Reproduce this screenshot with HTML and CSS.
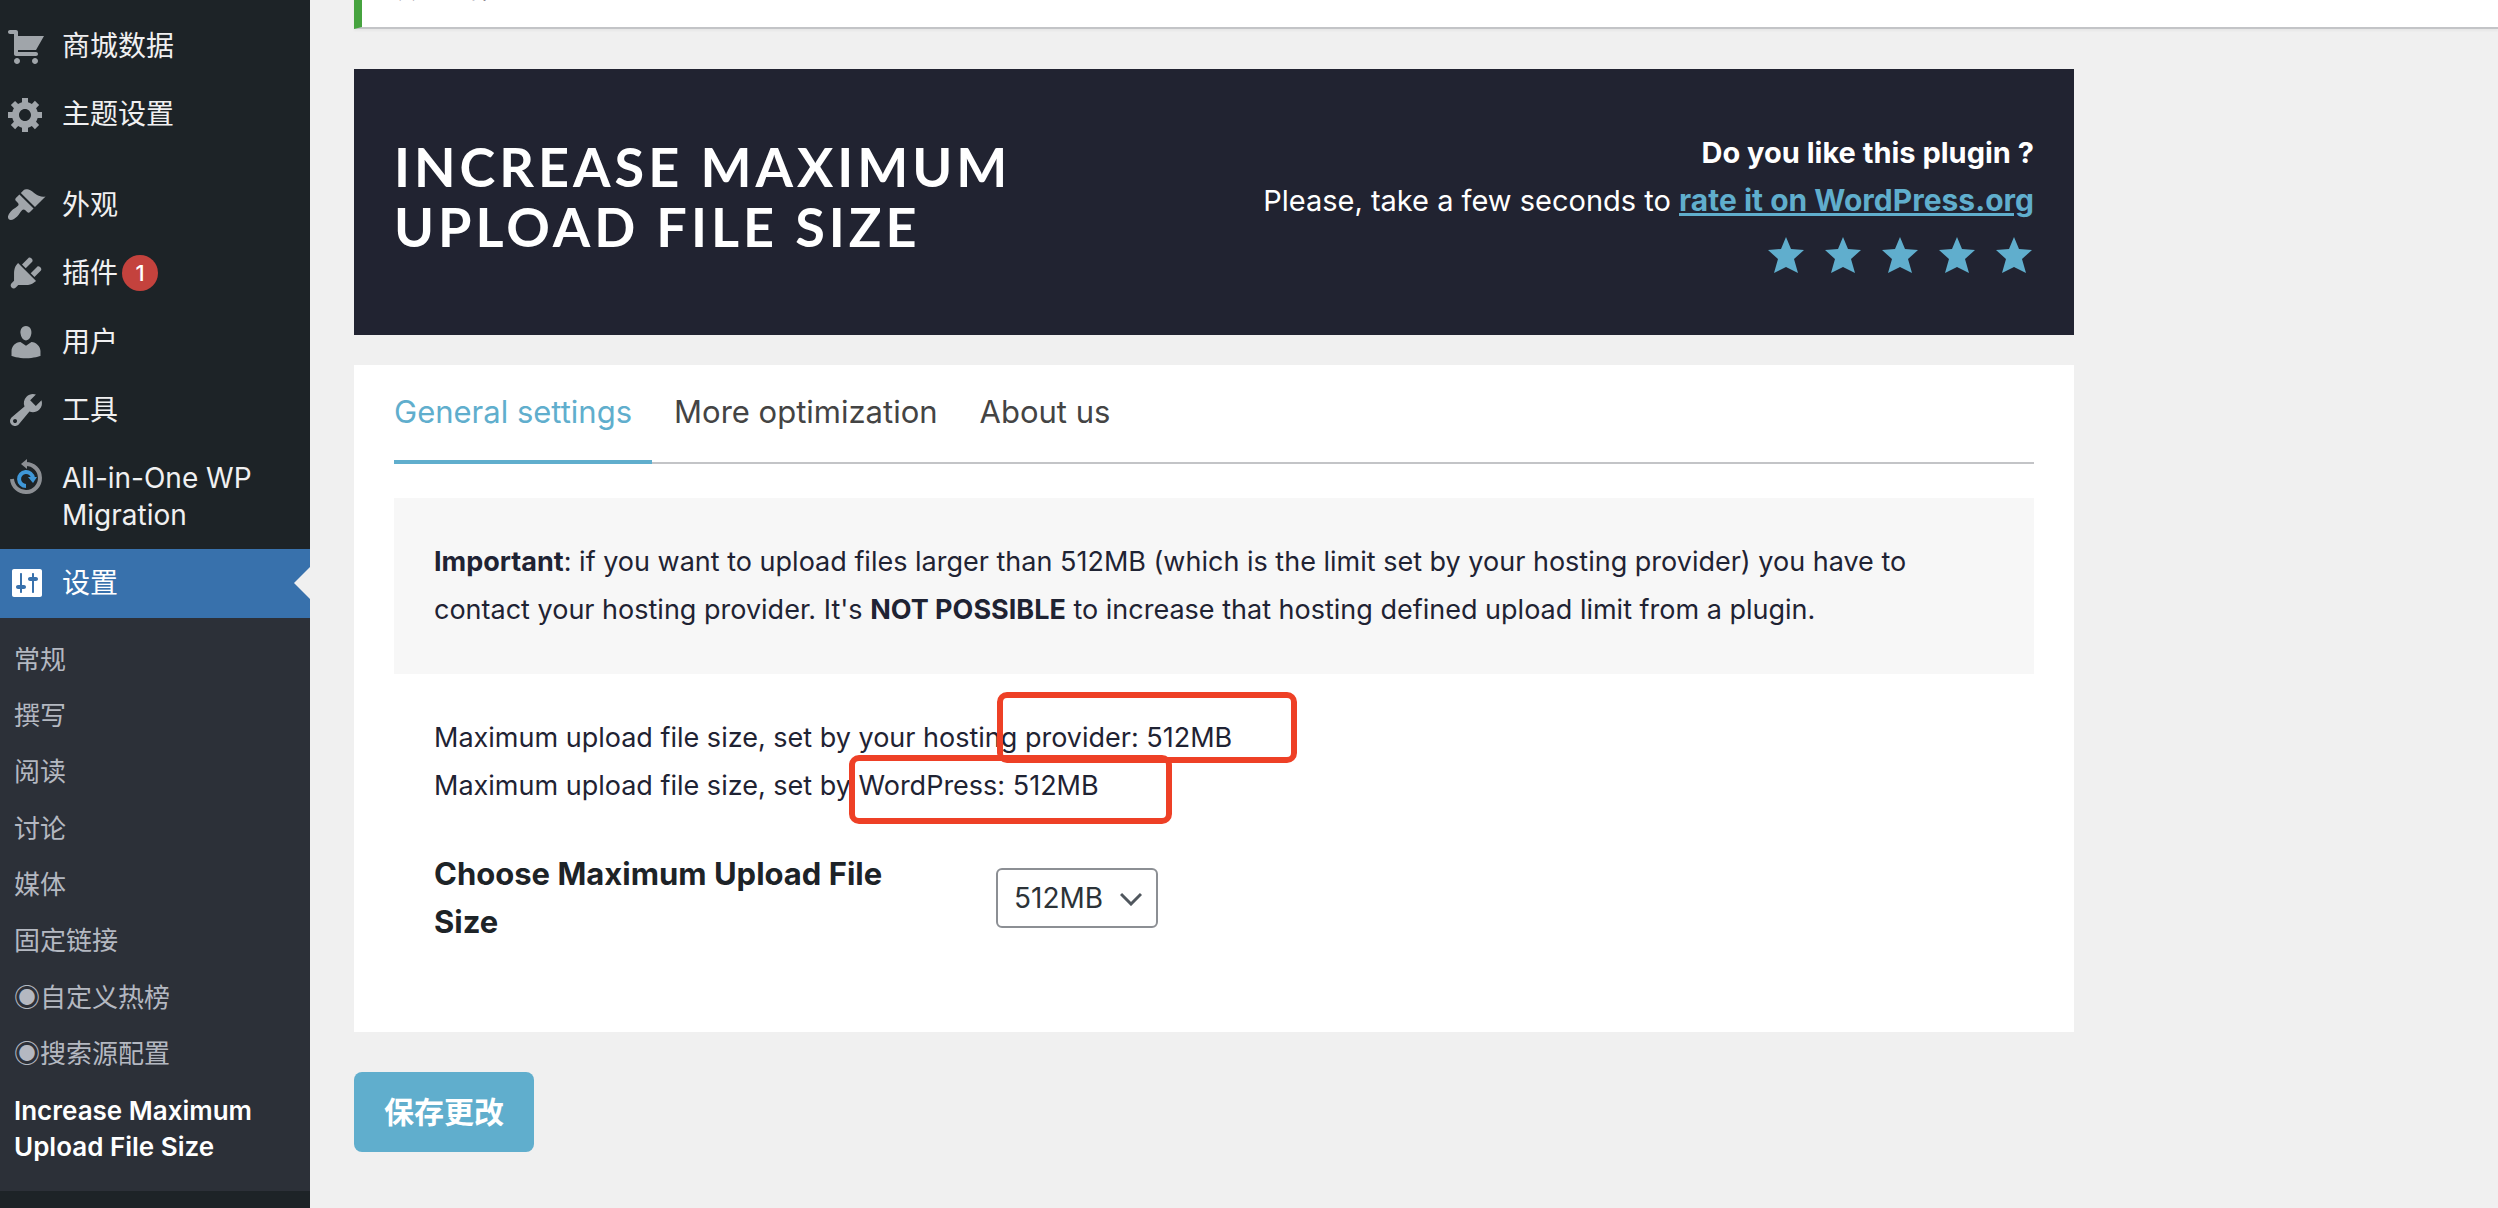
FILE: index.html
```html
<!DOCTYPE html>
<html lang="zh-CN">
<head>
<meta charset="utf-8">
<title>Increase Maximum Upload File Size</title>
<link rel="stylesheet" href="styles.css">
</head>
<body>
<div class="layout">
  <nav class="sidebar" aria-label="主菜单">
    <ul class="menu">
      <li><a class="menu-link" href="#"><svg class="icon" viewBox="0 0 20 20"><path d="M6 13h9c.55 0 1 .45 1 1s-.45 1-1 1H5c-.55 0-1-.45-1-1V4H2c-.55 0-1-.45-1-1s.45-1 1-1h3c.55 0 1 .45 1 1v2h13l-4 7H6v1zm-.5 3c.83 0 1.5.67 1.5 1.5S6.330 19 5.500 19 4 18.330 4 17.500 4.670 16 5.500 16zm9 0c.83 0 1.500.67 1.500 1.500s-.67 1.500-1.500 1.500-1.500-.67-1.500-1.500.67-1.500 1.500-1.500z"/></svg><span>商城数据</span></a></li>
      <li><a class="menu-link" href="#"><svg class="icon" viewBox="0 0 20 20"><path d="M18 12h-2.180c-.17.7-.44 1.350-.81 1.930l1.540 1.540-2.100 2.100-1.540-1.540c-.58.36-1.230.63-1.910.79V19H8v-2.180c-.68-.16-1.330-.43-1.910-.79l-1.540 1.540-2.120-2.120 1.540-1.540c-.36-.58-.63-1.230-.79-1.910H1V9.030h2.170c.16-.7.44-1.350.8-1.940L2.430 5.550l2.100-2.100 1.540 1.540c.58-.37 1.240-.64 1.930-.81V2h3v2.180c.68.16 1.330.43 1.910.79l1.540-1.540 2.120 2.120-1.540 1.540c.36.59.64 1.240.8 1.940H18V12zm-8.500 1.500c1.660 0 3-1.340 3-3s-1.340-3-3-3-3 1.340-3 3 1.340 3 3 3z"/></svg><span>主题设置</span></a></li>
      <li class="section-start"><a class="menu-link" href="#"><svg class="icon" viewBox="0 0 20 20"><path d="M14.480 11.060L7.410 3.990l1.500-1.500c.5-.56 2.300-.47 3.510.32 1.210.8 1.430 1.280 2.910 2.100 1.180.64 2.450 1.260 4.450.85zm-.71.71L6.700 4.700 4.930 6.470c-.39.39-.39 1.020 0 1.410l1.060 1.060c.39.39.39 1.030 0 1.420-.6.6-1.430 1.110-2.210 1.690-.35.26-.7.53-1.010.84C1.430 14.230.4 16.080 1.400 17.070c.99 1 2.840-.03 4.180-1.360.31-.31.58-.66.85-1.020.57-.78 1.080-1.610 1.690-2.210.39-.39 1.020-.39 1.410 0l1.060 1.060c.39.39 1.020.39 1.410 0z"/></svg><span>外观</span></a></li>
      <li><a class="menu-link" href="#"><svg class="icon" viewBox="0 0 20 20"><path d="M13.110 4.360L9.870 7.600 8 5.730l3.240-3.240c.35-.34 1.050-.2 1.560.32.52.51.66 1.210.31 1.550zm-8 1.770l.91-1.120 9.010 9.010-1.190.84c-.71.71-2.630 1.160-3.820 1.160H6.140L4.900 17.260c-.59.59-1.540.59-2.120 0-.59-.58-.59-1.530 0-2.120l1.240-1.240v-3.880c0-1.130.4-3.190 1.090-3.890zm7.260 3.970l3.240-3.240c.34-.35 1.040-.21 1.550.31.52.51.66 1.210.31 1.550l-3.240 3.250z"/></svg><span>插件</span><span class="count">1</span></a></li>
      <li><a class="menu-link" href="#"><svg class="icon" viewBox="0 0 20 20"><path d="M10 9.250c-2.270 0-2.730-3.440-2.730-3.440C7 4.020 7.820 2 9.970 2c2.160 0 2.980 2.020 2.710 3.810 0 0-.41 3.440-2.680 3.440zm0 2.570L12.720 10c2.390 0 4.520 2.330 4.520 4.530v2.490s-3.650 1.130-7.240 1.130c-3.650 0-7.240-1.130-7.240-1.130v-2.490c0-2.250 1.940-4.480 4.470-4.480z"/></svg><span>用户</span></a></li>
      <li><a class="menu-link" href="#"><svg class="icon" viewBox="0 0 20 20"><path d="M16.680 9.770c-1.340 1.340-3.300 1.670-4.950.99l-5.410 6.520c-.99.99-2.590.99-3.580 0s-.99-2.590 0-3.570l6.520-5.420c-.68-1.650-.35-3.610.99-4.950 1.280-1.280 3.120-1.620 4.720-1.060l-2.890 2.890 2.820 2.820 2.860-2.870c.53 1.580.18 3.390-1.080 4.650zM3.810 16.210c.4.390 1.040.390 1.430 0 .4-.4.4-1.040 0-1.430-.39-.4-1.030-.4-1.430 0-.39.390-.39 1.030 0 1.430z"/></svg><span>工具</span></a></li>
      <li><a class="menu-link" href="#"><svg class="icon" viewBox="0 0 40 40"><g fill="none"><path d="M6 21a14 14 0 1 0 14-15" stroke="#8c8f94" stroke-width="4"/><path d="M20 28a7 7 0 1 1 7-8" stroke="#3f97d8" stroke-width="4"/></g><path d="M21 1v10l-6-5z" fill="#8c8f94"/><path d="M22 19h9l-4 6z" fill="#3f97d8"/></svg><span>All-in-One WP Migration</span></a></li>
      <li>
        <a class="menu-link current" href="#" aria-current="true"><svg class="icon" viewBox="0 0 20 20"><path d="M18 16V4c0-.55-.45-1-1-1H4c-.55 0-1 .45-1 1v12c0 .55.45 1 1 1h13c.55 0 1-.45 1-1zM8 11h1c.55 0 1 .45 1 1s-.45 1-1 1H8v1.500c0 .28-.22.5-.5.5s-.5-.22-.5-.5V13H6c-.55 0-1-.45-1-1s.45-1 1-1h1V5.500c0-.28.22-.5.5-.5s.5.22.5.5V11zm5-2h-1c-.55 0-1-.45-1-1s.45-1 1-1h1V5.500c0-.28.22-.5.5-.5s.5.22.5.5V7h1c.55 0 1 .45 1 1s-.45 1-1 1h-1v5.500c0 .28-.22.5-.5.5s-.5-.22-.5-.5V9z"/></svg><span>设置</span></a>
        <ul class="submenu">
          <li><a href="#">常规</a></li>
          <li><a href="#">撰写</a></li>
          <li><a href="#">阅读</a></li>
          <li><a href="#">讨论</a></li>
          <li><a href="#">媒体</a></li>
          <li><a href="#">固定链接</a></li>
          <li><a href="#">◉自定义热榜</a></li>
          <li><a href="#">◉搜索源配置</a></li>
          <li><a class="active" href="#" aria-current="page">Increase Maximum Upload File Size</a></li>
        </ul>
      </li>
    </ul>
  </nav>

  <main class="content">
    <div class="notice"><p>设置已保存。</p></div>

    <header class="banner">
      <h1 class="banner-title">Increase Maximum<br>Upload File Size</h1>
      <div class="rating">
        <p><strong>Do you like this plugin ?</strong></p>
        <p>Please, take a few seconds to <a class="rate-link" href="#">rate it on WordPress.org</a></p>
        <a class="stars" href="#" aria-label="5 stars">
          <svg viewBox="0 0 36 36"><path d="M18 0l5 12 13 1-10 9 4 14-12-6-12 6 4-14L0 13l13-1z"/></svg>
          <svg viewBox="0 0 36 36"><path d="M18 0l5 12 13 1-10 9 4 14-12-6-12 6 4-14L0 13l13-1z"/></svg>
          <svg viewBox="0 0 36 36"><path d="M18 0l5 12 13 1-10 9 4 14-12-6-12 6 4-14L0 13l13-1z"/></svg>
          <svg viewBox="0 0 36 36"><path d="M18 0l5 12 13 1-10 9 4 14-12-6-12 6 4-14L0 13l13-1z"/></svg>
          <svg viewBox="0 0 36 36"><path d="M18 0l5 12 13 1-10 9 4 14-12-6-12 6 4-14L0 13l13-1z"/></svg>
        </a>
      </div>
    </header>

    <form class="settings">
      <section class="card">
        <nav class="tabs" aria-label="Settings sections">
          <a class="tab selected" href="#">General settings</a>
          <a class="tab" href="#">More optimization</a>
          <a class="tab" href="#">About us</a>
        </nav>
        <p class="important"><strong>Important</strong>: if you want to upload files larger than 512MB (which is the limit set by your hosting provider) you have to contact your hosting provider. It's <strong>NOT POSSIBLE</strong> to increase that hosting defined upload limit from a plugin.</p>
        <div class="limits">
          <p>Maximum upload file size, set by your hosting provider: 512MB</p>
          <p>Maximum upload file size, set by WordPress: 512MB</p>
          <span class="mark mark-provider"></span>
          <span class="mark mark-wordpress"></span>
        </div>
        <div class="field">
          <label for="max-size">Choose Maximum Upload File Size</label>
          <div class="select-wrap">
            <select id="max-size"><option>512MB</option></select>
            <svg class="chevron" viewBox="0 0 22 14"><path d="M1 2l10 10L21 2"/></svg>
          </div>
        </div>
      </section>
      <button class="save" type="submit">保存更改</button>
    </form>
  </main>
</div>
</body>
</html>
```
FILE: styles.css
```css
* { box-sizing: border-box; }

body {
  margin: 0;
  background: #f0f0f0;
  color: #1f2333;
  font-family: Inter, "Noto Sans CJK SC", sans-serif;
  font-size: 28px;
}

p, h1, ul { margin: 0; padding: 0; }
ul { list-style: none; }
a { text-decoration: none; }

.layout {
  display: flex;
  min-height: 100vh;
}

/* Admin menu */
.sidebar {
  flex: none;
  width: 310px;
  padding-top: 12px;
  background: #1d2327;
}

.section-start { margin-top: 22px; }

.menu-link {
  position: relative;
  display: flex;
  align-items: flex-start;
  padding: 16px 16px 16px 6px;
  color: #f0f0f1;
  line-height: 1.3;
}

.icon {
  flex: none;
  width: 40px;
  height: 40px;
  margin: -2px 16px -2px 0;
  fill: #a0a5aa;
}

.current {
  background: #3871ac;
  color: #fff;
}

.current .icon { fill: #fff; }

.current::after {
  content: "";
  position: absolute;
  right: 0;
  top: 50%;
  margin-top: -16px;
  border: 16px solid transparent;
  border-left: 0;
  border-right-color: #f0f0f0;
}

.count {
  width: 36px;
  height: 36px;
  margin-left: 4px;
  border-radius: 50%;
  background: #c4423d;
  color: #fff;
  font-size: 22px;
  font-weight: 500;
  line-height: 36px;
  text-align: center;
}

.submenu {
  padding: 14px 0 16px;
  background: #2c3038;
  font-size: 26px;
  line-height: 1.4;
}

.submenu a {
  display: block;
  padding: 10px 40px 10px 14px;
  color: #b4b8c1;
}

.submenu .active {
  color: #fff;
  font-weight: 600;
}

/* Page */
.content {
  flex: 1;
  min-width: 0;
  padding-left: 44px;
}

/* Sits partly above the top edge of the view */
.notice {
  margin: -29px 0 40px;
  padding: 0 24px 20px 28px;
  border-left: 8px solid #46a33f;
  border-bottom: 2px solid #c3c4c7;
  background: #fff;
  box-shadow: 0 2px 2px rgba(0, 0, 0, .04);
  font-size: 26px;
  line-height: 36px;
}

.banner,
.settings {
  max-width: 1720px;
}

.banner {
  display: flex;
  justify-content: space-between;
  align-items: flex-start;
  padding: 60px 40px 62px;
  background: #212331;
  color: #fff;
}

.banner-title {
  padding-top: 8px;
  font-family: Lato, sans-serif;
  font-size: 54px;
  font-weight: 700;
  letter-spacing: 4px;
  line-height: 60px;
  text-transform: uppercase;
}

.rating {
  font-size: 29px;
  line-height: 48px;
  text-align: right;
}

.rate-link {
  color: #60aecd;
  font-size: 30px;
  font-weight: 700;
  line-height: 1;
  text-decoration: underline;
}

.stars {
  display: flex;
  justify-content: flex-end;
  gap: 21px;
  padding: 12px 2px 0;
}

.stars svg {
  width: 36px;
  height: 36px;
  fill: #60aecd;
}

.card {
  margin: 30px 0 40px;
  padding: 20px 40px 86px;
  background: #fff;
}

.tabs {
  display: flex;
  gap: 22px;
  margin-bottom: 34px;
  box-shadow: inset 0 -2px #c3c4c7;
}

.tab {
  padding: 3px 20px 24px 0;
  border-bottom: 4px solid transparent;
  color: #444;
  font-size: 31px;
  line-height: 48px;
}

.tab.selected {
  border-color: #60aecd;
  color: #60aecd;
}

.important {
  padding: 40px;
  background: #f7f7f7;
  font-size: 27px;
  line-height: 48px;
}

.limits {
  position: relative;
  padding: 40px;
  font-size: 27px;
  line-height: 48px;
}

/* Highlight frames drawn over the limits */
.mark {
  position: absolute;
  border: 6px solid #ee4026;
  border-radius: 10px;
}

.mark-provider { left: 603px; top: 18px; width: 300px; height: 71px; }
.mark-wordpress { left: 455px; top: 81px; width: 323px; height: 69px; }

.field {
  display: flex;
  align-items: flex-start;
  gap: 62px;
  padding: 0 40px;
}

.field label {
  width: 500px;
  color: #1d2327;
  font-size: 31px;
  font-weight: 700;
  line-height: 48px;
}

.select-wrap {
  position: relative;
  margin-top: 18px;
}

.select-wrap select {
  display: block;
  width: 162px;
  height: 60px;
  padding: 0 16px;
  appearance: none;
  border: 2px solid #8c8f94;
  border-radius: 6px;
  background: #fff;
  color: #2c3338;
  font: inherit;
}

.chevron {
  position: absolute;
  right: 16px;
  top: 24px;
  width: 22px;
  height: 14px;
  fill: none;
  stroke: #50575e;
  stroke-width: 3;
  pointer-events: none;
}

.save {
  display: block;
  padding: 16px 30px;
  border: 0;
  border-radius: 8px;
  background: #60aecd;
  color: #fff;
  font: inherit;
  font-size: 30px;
  font-weight: 700;
  line-height: 48px;
}
```
